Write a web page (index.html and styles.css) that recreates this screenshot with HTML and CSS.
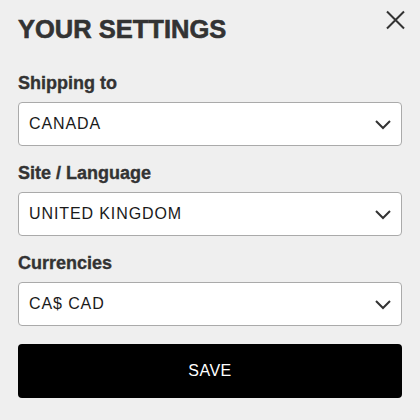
FILE: index.html
```html
<!DOCTYPE html>
<html lang="en">
<head>
<meta charset="utf-8">
<title>Your settings</title>
<link rel="stylesheet" href="styles.css">
</head>
<body>
<div class="panel">
  <div class="header">
    <h1 class="title">YOUR SETTINGS</h1>
    <button class="close" aria-label="Close">
      <svg width="24" height="24" viewBox="0 0 24 24"><path d="M4 3.5 L21 20.5 M21 3.5 L4 20.5" stroke="#333" stroke-width="2" fill="none"/></svg>
    </button>
  </div>
  <div class="field">
    <div class="label">Shipping to</div>
    <div class="select"><span class="value">CANADA</span><svg class="chev" width="16" height="10" viewBox="0 0 16 10"><path d="M1 1 L8 8 L15 1" stroke="#333" stroke-width="2" fill="none"/></svg></div>
  </div>
  <div class="field">
    <div class="label">Site / Language</div>
    <div class="select"><span class="value">UNITED KINGDOM</span><svg class="chev" width="16" height="10" viewBox="0 0 16 10"><path d="M1 1 L8 8 L15 1" stroke="#333" stroke-width="2" fill="none"/></svg></div>
  </div>
  <div class="field">
    <div class="label">Currencies</div>
    <div class="select"><span class="value">CA$ CAD</span><svg class="chev" width="16" height="10" viewBox="0 0 16 10"><path d="M1 1 L8 8 L15 1" stroke="#333" stroke-width="2" fill="none"/></svg></div>
  </div>
  <button class="save">SAVE</button>
</div>
</body>
</html>
```
FILE: styles.css
```css
html, body {
  margin: 0;
  padding: 0;
  background: #efefef;
}
body {
  font-family: "Liberation Sans", Arial, sans-serif;
  width: 420px;
  height: 420px;
  overflow: hidden;
}
.panel {
  padding: 14px 18px 0 18px;
  display: flex;
  flex-direction: column;
}
.header {
  display: flex;
  justify-content: space-between;
  align-items: flex-start;
  margin-bottom: 28px;
}
.title {
  margin: 0;
  font-size: 25.5px;
  line-height: 30px;
  font-weight: 700;
  color: #333;
  -webkit-text-stroke: 0.6px #333;
}
.close {
  width: 24px;
  height: 24px;
  padding: 0;
  margin: -6.5px -5px 0 0;
  border: 0;
  background: transparent;
  display: block;
}
.close svg { display: block; }
.field {
  display: flex;
  flex-direction: column;
  gap: 8px;
  margin-bottom: 16px;
}
.label {
  font-size: 18px;
  line-height: 22px;
  font-weight: 700;
  color: #333;
  -webkit-text-stroke: 0.35px #333;
}
.select {
  height: 44px;
  box-sizing: border-box;
  border: 1px solid #aaa;
  border-radius: 4px;
  background: #fff;
  display: flex;
  align-items: center;
  justify-content: space-between;
  padding: 0 10px 0 10px;
}
.value {
  font-size: 16px;
  letter-spacing: 0.9px;
  color: #1a1a1a;
}
.chev { display: block; margin-top: 1px; }
.field:last-of-type { margin-bottom: 18px; }
.save {
  height: 54px;
  border: 0;
  border-radius: 4px;
  background: #000;
  color: #fff;
  font-family: "Liberation Sans", Arial, sans-serif;
  font-size: 16px;
  letter-spacing: 0.5px;
  padding: 0;
}
```
